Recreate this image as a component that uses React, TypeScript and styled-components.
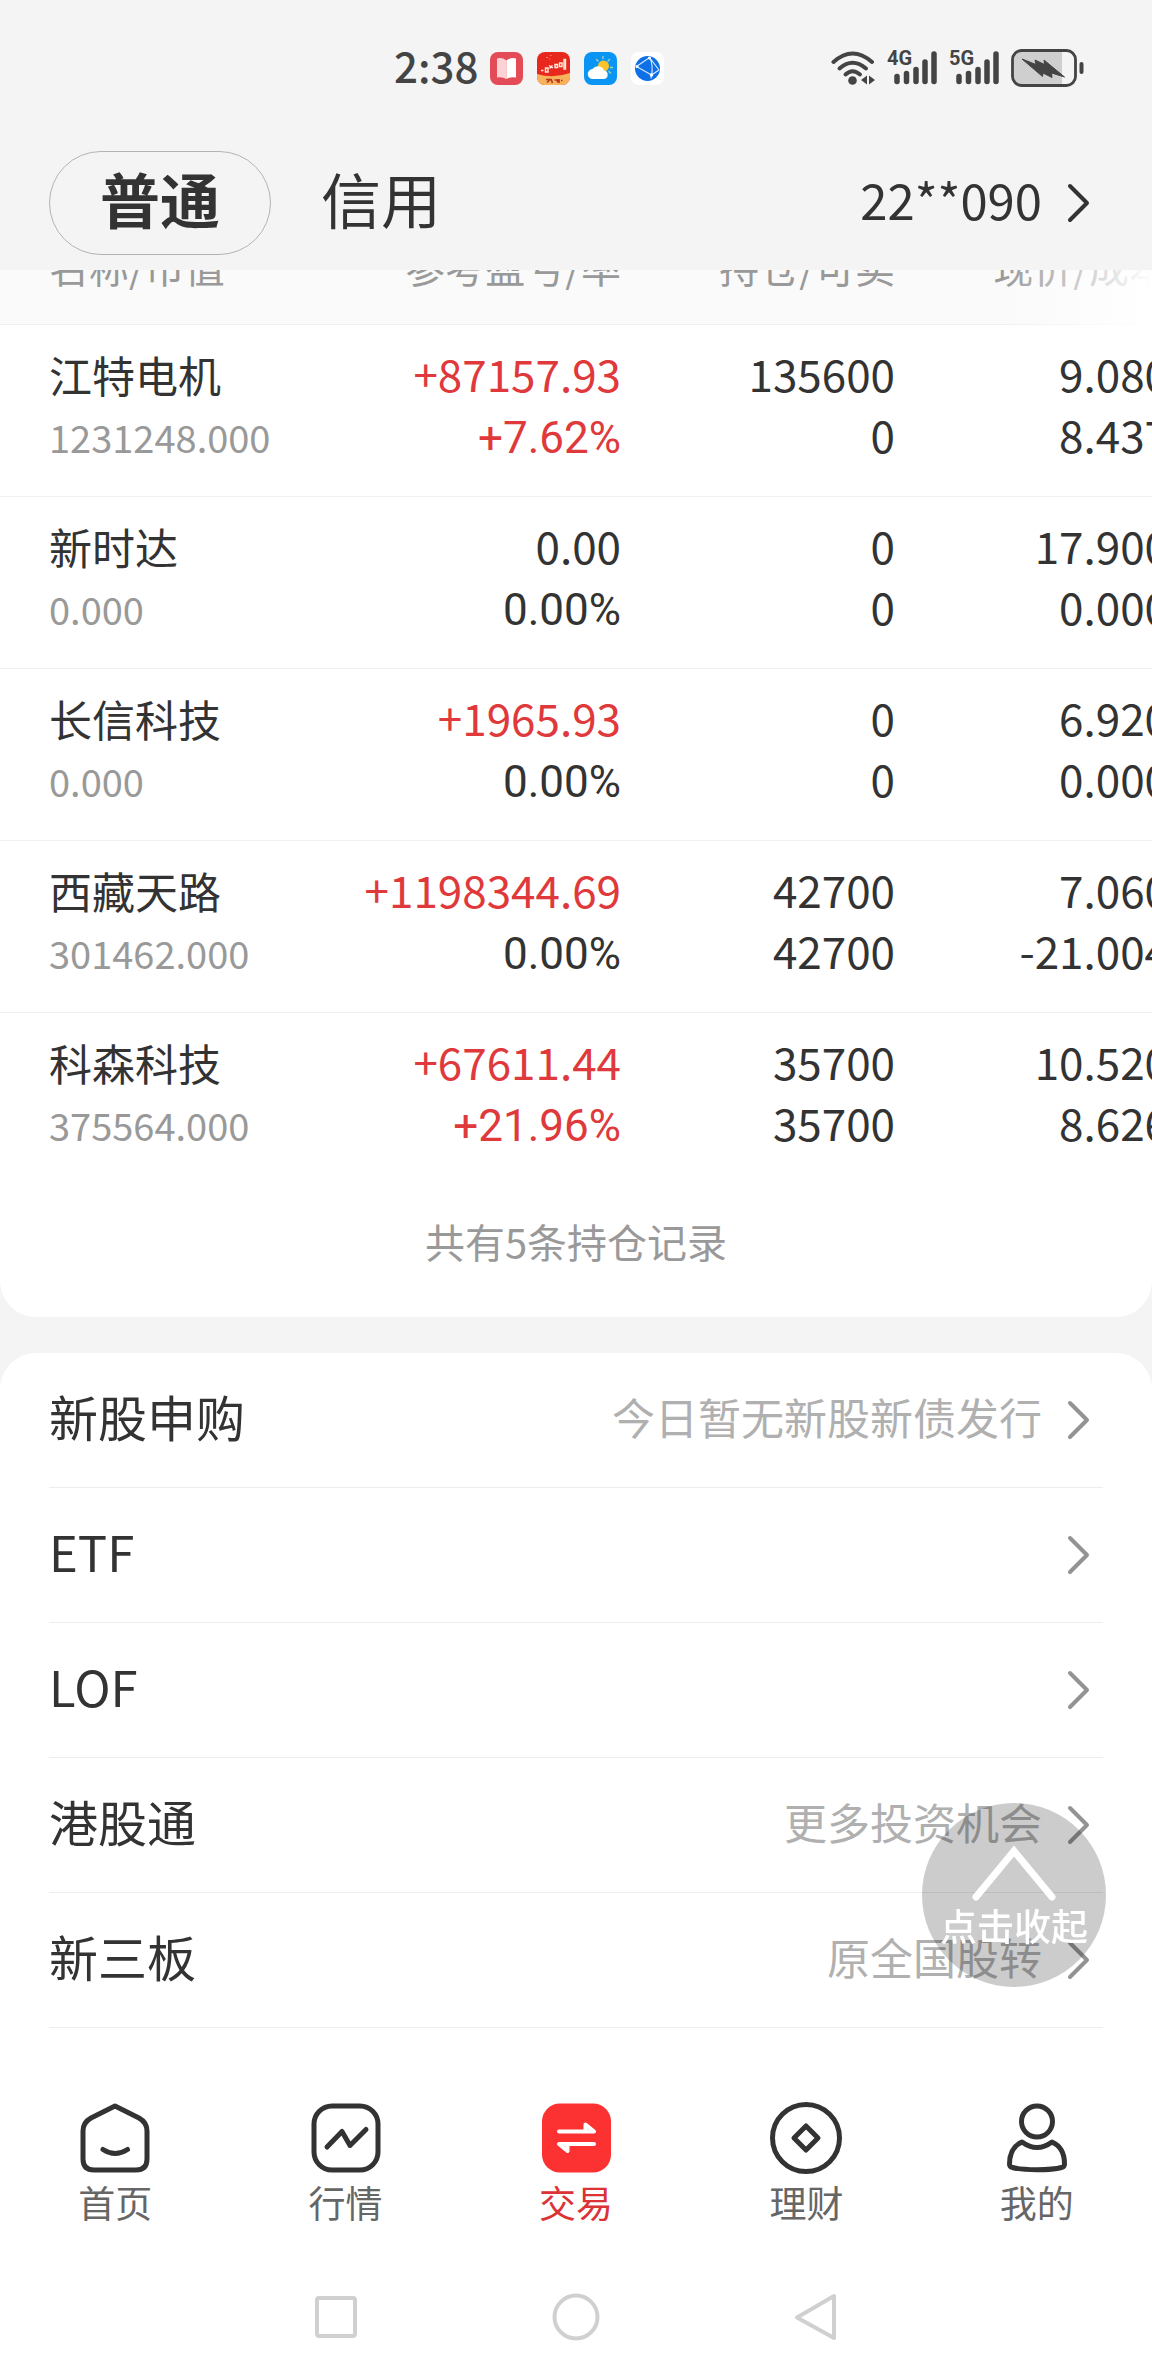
import React from "react";
import styled, { createGlobalStyle } from "styled-components";

const SANS = `"Noto Sans CJK SC", "Noto Sans", sans-serif`;
const INK = "#333333";
const MUTED = "#999999";
const RED = "#e0393c";
const LINE = "#f0f0f0";
const GUTTER = "49px";

const GlobalStyle = createGlobalStyle`
  *, *::before, *::after { box-sizing: border-box; }
  body {
    margin: 0;
    background: #f4f4f4;
    color: ${INK};
    font-family: ${SANS};
  }
  button {
    margin: 0;
    padding: 0;
    border: 0;
    background: none;
    color: inherit;
    font: inherit;
    cursor: pointer;
  }
  a { color: inherit; text-decoration: none; }
  svg { display: block; flex: none; }
`;

const Page = styled.div`
  display: flex;
  flex-direction: column;
  min-height: 100vh;
`;

/* ---------- status bar and account header ---------- */

const Top = styled.header`
  position: relative;
  z-index: 1;
  background: #f4f4f4;
`;

const StatusBar = styled.div`
  display: flex;
  align-items: center;
  justify-content: space-between;
  height: 136px;
  padding: 0 68px 0 394px;
  color: #444444;
`;

const StatusGroup = styled.div<{ $gap: number }>`
  display: flex;
  align-items: center;
  gap: ${(p) => p.$gap}px;
`;

const Clock = styled.time`
  padding-bottom: 6px;
  font-size: 42px;
  line-height: 50px;
  font-weight: 500;
`;

const SignalBox = styled.div`
  position: relative;
`;

const SignalLabel = styled.span`
  position: absolute;
  top: -2px;
  left: 0;
  font: 700 20px/20px Roboto, sans-serif;
`;

const AccountBar = styled.div`
  display: flex;
  align-items: center;
  justify-content: space-between;
  padding: 15px 61px 15px ${GUTTER};
`;

const AccountTabs = styled.div`
  display: flex;
  align-items: center;
  gap: 50px;
`;

const AccountTab = styled.button<{ $active?: boolean }>`
  height: 104px;
  padding: ${(p) => (p.$active ? "0 50px 10px" : "0 0 10px")};
  border: ${(p) => (p.$active ? "1px solid #b4b4b4" : "0")};
  border-radius: 52px;
  font-size: 60px;
  line-height: 80px;
  font-weight: ${(p) => (p.$active ? 700 : 400)};
`;

const AccountPicker = styled.button`
  display: flex;
  align-items: center;
  gap: 25px;
  font-size: 49px;
  line-height: 60px;
`;

const Raised = styled.span`
  padding-bottom: 8px;
`;

/* ---------- holdings ---------- */

const Holdings = styled.section`
  margin-top: -58px;
  background: #ffffff;
  border-radius: 0 0 36px 36px;
  overflow: hidden;
`;

const Scroller = styled.div`
  position: relative;
  overflow: hidden;
`;

const HeadFade = styled.div`
  position: absolute;
  top: 0;
  right: 0;
  width: 150px;
  height: 114px;
  background: linear-gradient(to right, rgba(255, 255, 255, 0), #ffffff);
`;

const Table = styled.table`
  width: calc(100% + 18px);
  min-width: 1170px;
  table-layout: fixed;
  border-collapse: separate;
  border-spacing: 0;
`;

const HeadCell = styled.th<{ $name?: boolean }>`
  width: ${(p) => (p.$name ? "auto" : "274px")};
  height: 113px;
  padding: 0 1px 4px ${(p) => (p.$name ? GUTTER : "0")};
  border-bottom: 1px solid ${LINE};
  background: #fafafa;
  color: ${MUTED};
  font-size: 40px;
  line-height: 60px;
  font-weight: 400;
  text-align: ${(p) => (p.$name ? "left" : "right")};
  white-space: nowrap;
`;

const Cell = styled.td<{ $name?: boolean }>`
  padding: 18px 1px 27px ${(p) => (p.$name ? GUTTER : "0")};
  border-bottom: 1px solid ${LINE};
  text-align: ${(p) => (p.$name ? "left" : "right")};
  vertical-align: top;
  white-space: nowrap;

  tr:last-child > & { border-bottom-color: transparent; }
`;

const Name = styled.div`
  font-size: 43px;
  line-height: 62px;
`;

const MarketValue = styled.div`
  color: ${MUTED};
  font-size: 38px;
  line-height: 64px;
`;

const Amount = styled.div<{ $up?: boolean }>`
  color: ${(p) => (p.$up ? RED : INK)};
  font-size: 44px;
  line-height: 61px;
`;

const Rate = styled.span`
  font-family: Roboto, ${SANS};
  line-height: 1;
`;

const Summary = styled.p`
  margin: 0;
  padding: 26px 0 46px;
  color: ${MUTED};
  font-size: 40px;
  line-height: 60px;
  text-align: center;
`;

/* ---------- market entries ---------- */

const Entries = styled.nav`
  flex: 1;
  margin-top: 36px;
  padding: 0 ${GUTTER} 50px;
  background: #ffffff;
  border-radius: 36px 36px 0 0;
`;

const Entry = styled.a`
  display: flex;
  align-items: center;
  gap: 25px;
  height: 135px;
  padding-right: 12px;
  border-bottom: 1px solid #ededed;
`;

const EntryTitle = styled.span`
  flex: 1;
  padding-bottom: 8px;
  font-size: 49px;
  line-height: 60px;
`;

const EntryNote = styled.span`
  padding-bottom: 8px;
  color: #b0b0b0;
  font-size: 43px;
  line-height: 60px;
`;

const CollapseButton = styled.button`
  position: fixed;
  right: 46px;
  bottom: 389px;
  z-index: 2;
  display: flex;
  flex-direction: column;
  align-items: center;
  width: 184px;
  height: 184px;
  padding-top: 40px;
  border-radius: 50%;
  background: rgba(0, 0, 0, 0.2);
  color: #ffffff;
  font-size: 37px;
  line-height: 44px;
  font-weight: 500;
`;

/* ---------- bottom bars ---------- */

const TabBar = styled.nav`
  display: grid;
  grid-template-columns: repeat(5, 1fr);
  padding: 24px 0 31px;
  background: #ffffff;
`;

const Tab = styled.a<{ $active?: boolean }>`
  display: flex;
  flex-direction: column;
  align-items: center;
  gap: 3px;
  color: ${(p) => (p.$active ? "#dc3337" : "#666666")};
  font-size: 37px;
  line-height: 50px;
`;

const SystemBar = styled.div`
  display: grid;
  grid-template-columns: repeat(3, 1fr);
  height: 118px;
  padding: 0 18.75%;
  background: #ffffff;
`;

const SystemButton = styled.button`
  display: flex;
  align-items: center;
  justify-content: center;
`;

/* ---------- drawings ---------- */

const Chevron = ({ color }: { color: string }) => (
  <svg width="24" height="40" viewBox="0 0 24 40" fill="none" stroke={color} strokeWidth="4" strokeLinecap="round" strokeLinejoin="round" aria-hidden="true">
    <path d="M3 3 20 20 3 37" />
  </svg>
);

const BookIcon = () => (
  <svg width="33" height="33" viewBox="0 0 33 33" aria-hidden="true">
    <rect width="33" height="33" rx="8" fill="#e34b57" />
    <path d="M7 6.500Q12 5 16.500 8.500V27Q12 24.500 7 25.500Z" fill="#fbd3d5" />
    <path d="M26 6.500Q21 5 16.500 8.500V27Q21 24.500 26 25.500Z" fill="#ffffff" />
  </svg>
);

const StockIcon = () => (
  <svg width="33" height="33" viewBox="0 0 33 33" aria-hidden="true">
    <rect width="33" height="33" rx="8" fill="#e8281f" />
    <path d="M0 22Q16 27 33 21V25A8 8 0 0 1 25 33H8A8 8 0 0 1 0 25Z" fill="#f7b35c" />
    <g fill="none" stroke="#ffe9d8" strokeWidth="1.4">
      <path d="M4 18.500h2.500M8.500 16h2.500v4h-2.500zM12 13.500l4 2.500M12.500 16.500l3-3M18 12.500h2.500v3H18zM22.500 11h2.500v3.500h-2.500zM27 7.500h1.500v9.500h-1.500z" />
    </g>
    <path d="M9 5.500h2M13 3.500h1.500M12 7h1" stroke="#f7876c" />
    <path d="M9 27.500h4l-3 3M14 27l1.500 4M17.500 28h3v2.500M22 27v4M24 28.500h1.500" fill="none" stroke="#b9331c" strokeWidth="1.600" />
  </svg>
);

const WeatherIcon = () => (
  <svg width="33" height="33" viewBox="0 0 33 33" aria-hidden="true">
    <rect width="33" height="33" rx="8" fill="#0a95f5" />
    <path d="M19 4.500v2M12.500 7.500l1.500 1.500M25.500 7.500 24 9M26.500 15.500h2M25 19.500l1.500 1.500" stroke="#a6d8a8" strokeWidth="1.300" strokeLinecap="round" />
    <circle cx="19.500" cy="14" r="5.500" fill="#fcc32d" />
    <path d="M9 27a5 5 0 0 1-.5-10 6.500 6.500 0 0 1 11.500 1.500A4.300 4.300 0 0 1 20 27Z" fill="#ffffff" />
  </svg>
);

const BrowserIcon = () => (
  <svg width="33" height="33" viewBox="0 0 33 33" aria-hidden="true">
    <rect width="33" height="33" rx="8" fill="#ffffff" />
    <circle cx="16.500" cy="16.500" r="12.500" fill="#0d70e6" />
    <path d="M5.500 14.500 18.500 5.500Q23 13 20 26.500M5.500 14.500 20.500 23M18.500 5.500 28 18M20.500 23 28 18" fill="none" stroke="#d5e9ff" strokeWidth="1.200" />
    <circle cx="6" cy="14.500" r="1.500" fill="#fff" />
    <circle cx="18.500" cy="6" r="1.500" fill="#fff" />
    <circle cx="20.500" cy="23" r="1.700" fill="#fff" />
  </svg>
);

const WifiIcon = () => (
  <svg width="44" height="36" viewBox="0 0 44 36" fill="none" stroke="currentColor" strokeLinecap="round" aria-hidden="true">
    <path d="M2.500 12Q21.500-5 41 12" strokeWidth="4" />
    <path d="M8.500 18.500Q21.500 7 35 18.500" strokeWidth="4" />
    <path d="M14.500 24.500Q21.500 18 29 24.500" strokeWidth="4" />
    <circle cx="21.500" cy="30.500" r="4.300" fill="currentColor" stroke="none" />
    <path d="M36 25.500v9l-6-4.500ZM38 25.500v9l6-4.500Z" fill="currentColor" stroke="none" />
  </svg>
);

const Signal = ({ label }: { label: string }) => (
  <SignalBox>
    <SignalLabel>{label}</SignalLabel>
    <svg width="50" height="36" viewBox="0 0 50 36" fill="none" stroke="currentColor" strokeWidth="5.500" strokeLinecap="round" aria-hidden="true">
      <path d="M10 26.500v5M19.500 23.500v8M29 19.500v12M38 12v19.500M47 4v27.500" />
    </svg>
  </SignalBox>
);

const BatteryIcon = () => (
  <svg width="73" height="38" viewBox="0 0 73 38" aria-hidden="true">
    <path d="M2 11A9 9 0 0 1 11 2H51V36H11A9 9 0 0 1 2 27Z" fill="#cfcfcf" />
    <rect x="1.500" y="1.500" width="63" height="35" rx="9" fill="none" stroke="currentColor" strokeWidth="2.800" />
    <path d="M11 10 25 15.500 24 11 33.500 15.500 33 11 53.500 28 40.500 24 41 28.500 32 24 31.500 27.500Z" fill="currentColor" stroke="currentColor" strokeLinejoin="round" />
    <rect x="68.500" y="13" width="4" height="12" rx="2" fill="currentColor" />
  </svg>
);

const TabIcon = ({ children }: { children: React.ReactNode }) => (
  <svg width="72" height="72" viewBox="0 0 72 72" fill="none" stroke={INK} strokeWidth="5" strokeLinecap="round" strokeLinejoin="round" aria-hidden="true">
    {children}
  </svg>
);

const TABS = [
  {
    label: "首页",
    icon: (
      <>
        <path d="M36 4 60 16Q68 20.500 68 29V57Q68 68 57 68H15Q4 68 4 57V29Q4 20.500 12 16Z" />
        <path d="M24 47.500Q36 55.500 48.500 47.500" />
      </>
    ),
  },
  {
    label: "行情",
    icon: (
      <>
        <rect x="4" y="4" width="64" height="64" rx="18" />
        <path d="M17 45 32 29.500 40 43.500 56 27.500" />
      </>
    ),
  },
  {
    label: "交易",
    active: true,
    icon: (
      <>
        <rect x="2" y="1.500" width="69" height="69" rx="18" fill="#fc3232" stroke="none" />
        <path d="M19 29.500H54L45.500 22.500V29M54 42H19L27.500 49V42" stroke="#ffffff" strokeWidth="4" />
      </>
    ),
  },
  {
    label: "理财",
    icon: (
      <>
        <circle cx="36" cy="36" r="33.500" />
        <path d="M36 24 48 36 36 48 24 36Z" />
      </>
    ),
  },
  {
    label: "我的",
    icon: (
      <>
        <ellipse cx="36" cy="19.500" rx="15.500" ry="15.500" />
        <path d="M21 40Q36 51 51 40C60 44 63.500 53 63.500 62Q63.500 65 60.500 65.500C50 68.500 22 68.500 11.500 65.500Q8.500 65 8.500 62C8.500 53 12 44 21 40Z" />
      </>
    ),
  },
];

/* ---------- data ---------- */

const COLUMNS = ["名称/市值", "参考盈亏/率", "持仓/可卖", "现价/成本"];

const HOLDINGS = [
  { name: "江特电机", value: "1231248.000", profit: "+87157.93", rate: "+7.62%", held: "135600", sellable: "0", price: "9.080", cost: "8.437" },
  { name: "新时达", value: "0.000", profit: "0.00", rate: "0.00%", held: "0", sellable: "0", price: "17.900", cost: "0.000" },
  { name: "长信科技", value: "0.000", profit: "+1965.93", rate: "0.00%", held: "0", sellable: "0", price: "6.920", cost: "0.000" },
  { name: "西藏天路", value: "301462.000", profit: "+1198344.69", rate: "0.00%", held: "42700", sellable: "42700", price: "7.060", cost: "-21.004" },
  { name: "科森科技", value: "375564.000", profit: "+67611.44", rate: "+21.96%", held: "35700", sellable: "35700", price: "10.520", cost: "8.626" },
];

const ENTRIES = [
  { title: "新股申购", note: "今日暂无新股新债发行" },
  { title: "ETF" },
  { title: "LOF" },
  { title: "港股通", note: "更多投资机会" },
  { title: "新三板", note: "原全国股转" },
];

const isGain = (text: string) => text.startsWith("+");

export default function App() {
  return (
    <>
      <GlobalStyle />
      <Page>
        <Top>
          <StatusBar>
            <StatusGroup $gap={12}>
              <Clock>2:38</Clock>
              <StatusGroup $gap={14}>
                <BookIcon />
                <StockIcon />
                <WeatherIcon />
                <BrowserIcon />
              </StatusGroup>
            </StatusGroup>
            <StatusGroup $gap={12}>
              <WifiIcon />
              <Signal label="4G" />
              <Signal label="5G" />
              <BatteryIcon />
            </StatusGroup>
          </StatusBar>
          <AccountBar>
            <AccountTabs>
              <AccountTab $active>普通</AccountTab>
              <AccountTab>信用</AccountTab>
            </AccountTabs>
            <AccountPicker>
              <Raised>22**090</Raised>
              <Chevron color={INK} />
            </AccountPicker>
          </AccountBar>
        </Top>

        <Holdings>
          <Scroller>
            <Table>
              <thead>
                <tr>
                  {COLUMNS.map((title, i) => (
                    <HeadCell key={title} $name={i === 0} scope="col">
                      {title}
                    </HeadCell>
                  ))}
                </tr>
              </thead>
              <tbody>
                {HOLDINGS.map((h) => (
                  <tr key={h.name}>
                    <Cell $name>
                      <Name>{h.name}</Name>
                      <MarketValue>{h.value}</MarketValue>
                    </Cell>
                    <Cell>
                      <Amount $up={isGain(h.profit)}>{h.profit}</Amount>
                      <Amount $up={isGain(h.rate)}>
                        <Rate>{h.rate}</Rate>
                      </Amount>
                    </Cell>
                    <Cell>
                      <Amount>{h.held}</Amount>
                      <Amount>{h.sellable}</Amount>
                    </Cell>
                    <Cell>
                      <Amount>{h.price}</Amount>
                      <Amount>{h.cost}</Amount>
                    </Cell>
                  </tr>
                ))}
              </tbody>
            </Table>
            <HeadFade />
          </Scroller>
          <Summary>共有5条持仓记录</Summary>
        </Holdings>

        <Entries>
          {ENTRIES.map((e) => (
            <Entry key={e.title} href="#">
              <EntryTitle>{e.title}</EntryTitle>
              {e.note && <EntryNote>{e.note}</EntryNote>}
              <Chevron color="#939393" />
            </Entry>
          ))}
        </Entries>

        <TabBar>
          {TABS.map((t) => (
            <Tab key={t.label} href="#" $active={t.active}>
              <TabIcon>{t.icon}</TabIcon>
              {t.label}
            </Tab>
          ))}
        </TabBar>

        <SystemBar>
          <SystemButton aria-label="最近任务">
            <svg width="48" height="48" viewBox="0 0 48 48" fill="none" stroke="#d0d0d0" strokeWidth="4">
              <rect x="5" y="5" width="38" height="38" rx="2" />
            </svg>
          </SystemButton>
          <SystemButton aria-label="主屏幕">
            <svg width="48" height="48" viewBox="0 0 48 48" fill="none" stroke="#d0d0d0" strokeWidth="4">
              <circle cx="24" cy="24" r="21.500" />
            </svg>
          </SystemButton>
          <SystemButton aria-label="返回">
            <svg width="48" height="48" viewBox="0 0 48 48" fill="none" stroke="#d0d0d0" strokeWidth="4" strokeLinejoin="round">
              <path d="M42 3V45L5 24.500Z" />
            </svg>
          </SystemButton>
        </SystemBar>
      </Page>

      <CollapseButton>
        <svg width="88" height="60" viewBox="0 0 88 60" fill="none" stroke="#ffffff" strokeWidth="7" strokeLinecap="round" aria-hidden="true">
          <path d="M6 54 44 8 82 54" />
        </svg>
        点击收起
      </CollapseButton>
    </>
  );
}
